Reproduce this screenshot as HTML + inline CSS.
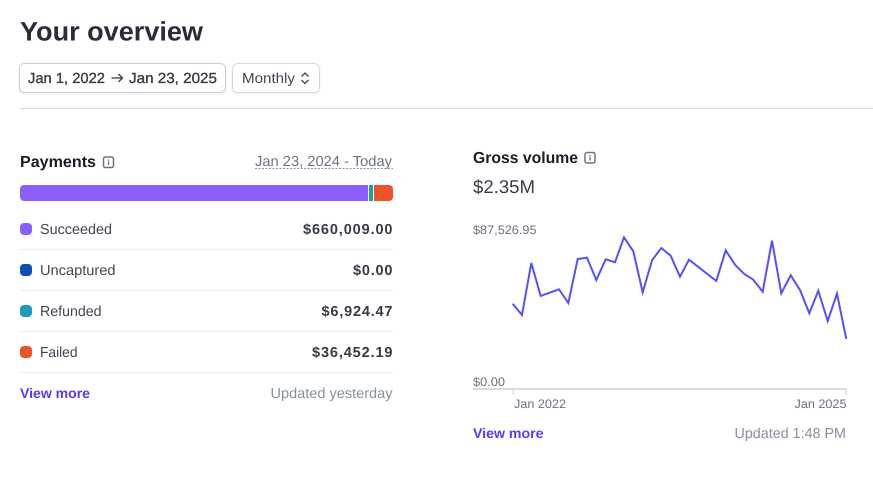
<!DOCTYPE html>
<html lang="en">
<head>
<meta charset="utf-8">
<title>Your overview</title>
<style>
html,body{margin:0;padding:0;background:#fff;width:873px;height:482px;overflow:hidden}
svg{display:block}
text{font-family:"Liberation Sans",sans-serif;font-size:14.5px;text-rendering:geometricPrecision}
.b{font-weight:700}
.med{fill:#353a44;stroke:#353a44;stroke-width:.35px;font-size:14.6px}
.lab{fill:#414552}
.val{fill:#353a44;font-weight:700}
.mut{fill:#6a7383}
.up{fill:#87909f}
.lnk{fill:#533afd;font-weight:700;font-size:14px}
.ttl{fill:#1a1b25;font-weight:700;font-size:16px}
.ln{stroke:#ebeef1;stroke-width:1}
</style>
</head>
<body>
<svg width="873" height="482" viewBox="0 0 873 482" xmlns="http://www.w3.org/2000/svg">
<defs>
<filter id="s" x="-10%" y="-20%" width="120%" height="150%"><feDropShadow dx="0" dy="1" stdDeviation="1" flood-color="#40445a" flood-opacity=".08"/></filter>
<clipPath id="barc"><rect x="20" y="185" width="373" height="16" rx="4"/></clipPath>
</defs>

<text x="20" y="40.500" textLength="183" lengthAdjust="spacingAndGlyphs" class="b" style="font-size:26.750px" fill="#2b2c38">Your overview</text>

<rect x="19.500" y="63.500" width="206" height="29" rx="5" fill="#fff" stroke="#c9d0d9" filter="url(#s)"/>
<rect x="232.500" y="63.500" width="87" height="29" rx="5" fill="#fff" stroke="#d5dbe1" filter="url(#s)"/>
<text x="28" y="83" textLength="77" lengthAdjust="spacingAndGlyphs" class="med">Jan 1, 2022</text>
<path d="M111.500 78h11M118.500 74l4 4-4 4" fill="none" stroke="#353a44" stroke-width="1.300"/>
<text x="129" y="83" textLength="88" lengthAdjust="spacingAndGlyphs" class="med">Jan 23, 2025</text>
<text x="242" y="83" textLength="53" lengthAdjust="spacingAndGlyphs" fill="#414552">Monthly</text>
<path d="M301.500 76.500l3.500-3.500 3.500 3.500M301.500 80l3.500 3.500 3.500-3.500" fill="none" stroke="#414552" stroke-width="1.300"/>

<rect x="20" y="108" width="853" height="1" fill="#d5dbe1"/>

<text x="20" y="167" textLength="76" lengthAdjust="spacingAndGlyphs" class="ttl">Payments</text>
<rect x="103.500" y="157" width="10" height="10.500" rx="2" fill="none" stroke="#6a7383" stroke-width="1.500"/>
<path d="M108.500 159.500v1.200M108.500 161.500v3.500" stroke="#6a7383" stroke-width="1.400"/>
<text x="255" y="166" textLength="137" lengthAdjust="spacingAndGlyphs" class="mut">Jan 23, 2024 - Today</text>
<path d="M255 168.500h138" stroke="#8792a2" stroke-width="1" stroke-dasharray="2 1.500"/>

<g clip-path="url(#barc)">
<rect x="20" y="185" width="348" height="16" fill="#8d5ffa"/>
<rect x="369" y="185" width="4" height="16" fill="#1a9db8"/>
<rect x="374" y="185" width="19" height="16" fill="#ea5527"/>
</g>

<rect x="20" y="223" width="12" height="12" rx="4" fill="#8d5ffa"/>
<text x="40" y="234" textLength="72" lengthAdjust="spacingAndGlyphs" class="lab">Succeeded</text>
<text x="303" y="234" textLength="89.500" lengthAdjust="spacing" class="val">$660,009.00</text>
<path class="ln" d="M20 249.500h373"/>

<rect x="20" y="264" width="12" height="12" rx="4" fill="#0e4eb1"/>
<text x="40" y="275" textLength="75.500" lengthAdjust="spacingAndGlyphs" class="lab">Uncaptured</text>
<text x="353" y="275" textLength="39.500" lengthAdjust="spacing" class="val">$0.00</text>
<path class="ln" d="M20 290.500h373"/>

<rect x="20" y="305" width="12" height="12" rx="4" fill="#1a9db8"/>
<text x="40" y="316" textLength="61.500" lengthAdjust="spacingAndGlyphs" class="lab">Refunded</text>
<text x="321.500" y="316" textLength="71" lengthAdjust="spacing" class="val">$6,924.47</text>
<path class="ln" d="M20 331.500h373"/>

<rect x="20" y="346" width="12" height="12" rx="4" fill="#ea5527"/>
<text x="40" y="357" textLength="37.500" lengthAdjust="spacingAndGlyphs" class="lab">Failed</text>
<text x="312" y="357" textLength="80.500" lengthAdjust="spacing" class="val">$36,452.19</text>
<path class="ln" d="M20 372.500h373"/>

<text x="20" y="398" textLength="70" lengthAdjust="spacingAndGlyphs" class="lnk">View more</text>
<text x="270.500" y="398" textLength="122" lengthAdjust="spacingAndGlyphs" class="up">Updated yesterday</text>

<text x="473" y="163" textLength="105" lengthAdjust="spacingAndGlyphs" class="ttl">Gross volume</text>
<rect x="585" y="152.500" width="10" height="10.500" rx="2" fill="none" stroke="#6a7383" stroke-width="1.500"/>
<path d="M590 155v1.200M590 157v3.500" stroke="#6a7383" stroke-width="1.400"/>
<text x="473" y="193" textLength="62" lengthAdjust="spacingAndGlyphs" fill="#353a44" style="font-size:18.500px">$2.35M</text>

<text x="473" y="234" textLength="63.500" lengthAdjust="spacingAndGlyphs" class="mut" style="font-size:12.300px">$87,526.95</text>
<text x="473" y="386" textLength="32" lengthAdjust="spacingAndGlyphs" class="mut" style="font-size:12.300px">$0.00</text>

<polyline fill="none" stroke="#5651f7" stroke-width="2" stroke-linejoin="miter" points="512.700,303.700 522,315 531.300,263 540.700,296 559,289.300 568.300,303 577.700,259 587,257.700 596.300,280 605.700,259.300 615,262.300 624,237.300 633.300,251.300 642.700,292.300 652,260.300 661.300,248 670.700,255.700 680,276.700 689,259.700 716.300,281 725.700,250.300 735,264.700 744.300,274 753.300,279.700 762.700,291.700 772,240.700 781.300,293.300 790.700,275.300 800,290 809.300,313.300 818.300,290.700 827.700,321 837,293.700 846.300,339"/>

<rect x="473" y="388" width="374" height="2" fill="#d5dbe1"/>
<rect x="512.500" y="390" width="2" height="5" fill="#e3e7ec"/>
<rect x="845" y="390" width="2" height="5" fill="#e3e7ec"/>
<text x="514" y="408" textLength="52" lengthAdjust="spacingAndGlyphs" class="mut" style="font-size:12.300px">Jan 2022</text>
<text x="794.500" y="408" textLength="52" lengthAdjust="spacingAndGlyphs" class="mut" style="font-size:12.300px">Jan 2025</text>

<text x="473" y="438" textLength="70.500" lengthAdjust="spacingAndGlyphs" class="lnk">View more</text>
<text x="734.500" y="438" textLength="111.500" lengthAdjust="spacingAndGlyphs" class="up">Updated 1:48 PM</text>
</svg>
</body>
</html>
